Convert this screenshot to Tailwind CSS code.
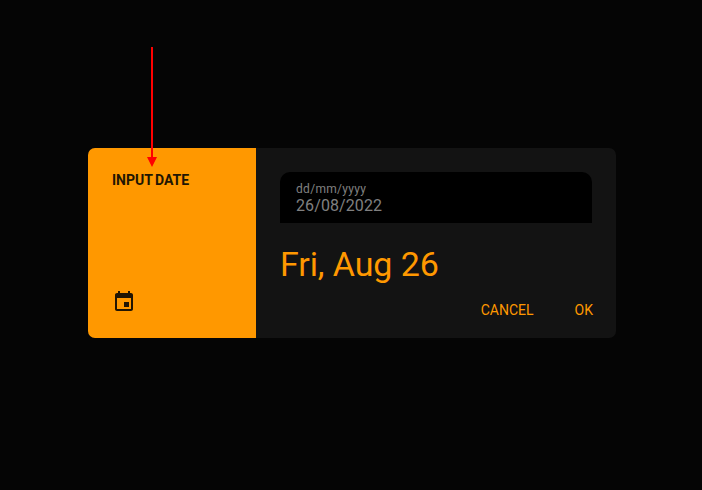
<!DOCTYPE html>
<html lang="en">
<head>
<meta charset="utf-8">
<title>Date picker</title>
<script src="https://cdn.jsdelivr.net/npm/@tailwindcss/browser@4"></script>
</head>
<body class="relative h-[490px] w-[702px] overflow-hidden bg-[#050505] pt-[148px] pl-[88px] font-[Roboto,sans-serif]">
<main class="flex h-[190px] w-[528px] overflow-hidden rounded-[7px] bg-[#131313]">
  <aside class="flex w-[168px] flex-col justify-between bg-[#ff9800] p-6 text-[#211503]">
    <h1 class="text-sm leading-4 font-bold [word-spacing:-1px] whitespace-nowrap">INPUT DATE</h1>
    <svg class="size-6" viewBox="0 0 24 24" fill="currentColor" aria-hidden="true"><path d="M17 12h-5v5h5v-5zM16 1v2H8V1H6v2H5c-1.11 0-1.99.9-1.99 2L3 19c0 1.1.89 2 2 2h14c1.1 0 2-.9 2-2V5c0-1.1-.9-2-2-2h-1V1h-2zm3 18H5V8h14v11z"/></svg>
  </aside>
  <section class="flex flex-1 flex-col p-6">
    <div class="h-[51px] shrink-0 rounded-t-[10px] bg-black px-4 pt-[9px] text-[#808080]">
      <div class="text-xs leading-[17px] tracking-[0.3px]">dd/mm/yyyy</div>
      <div class="text-base leading-4 tracking-[0.1px]">26/08/2022</div>
    </div>
    <h2 class="mt-[21px] text-[34px] leading-[40px] tracking-[-0.1px] text-[#ff9800]">Fri, Aug 26</h2>
    <div class="-mr-px mt-[18px] flex justify-end gap-[41px] text-sm leading-4 text-[#ff9800]">
      <button>CANCEL</button>
      <button>OK</button>
    </div>
  </section>
</main>
<svg class="absolute top-[47px] left-[146px]" width="12" height="120" viewBox="0 0 12 120" aria-hidden="true"><path d="M5 0h2v110h4L6 120 1 110h4z" fill="#f00"/></svg>
</body>
</html>
